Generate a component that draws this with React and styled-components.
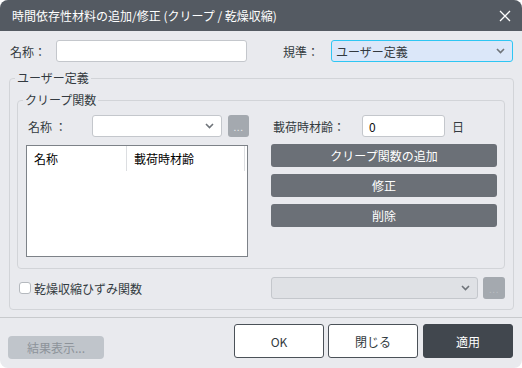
import { createGlobalStyle, styled } from "styled-components";

const GlobalStyle = createGlobalStyle`
  html, body {
    margin: 0;
    padding: 0;
    background: #ffffff;
  }
  body {
    font-family: "Noto Sans CJK JP", "Noto Sans", sans-serif;
    font-size: 12px;
    color: #333a40;
  }
`;

const Dialog = styled.div`
  width: 522px;
  height: 368px;
  background: #e9eaee;
  border-radius: 8px;
  overflow: hidden;
  display: flex;
  flex-direction: column;
`;

const TitleBar = styled.div`
  height: 31px;
  flex: none;
  background: #545a62;
  color: #ffffff;
  display: flex;
  align-items: center;
  justify-content: space-between;
  padding: 0 11px 0 12px;
  font-size: 12px;
`;

const Body = styled.div`
  padding: 9px 8px 0 9px;
`;

const Row = styled.div`
  display: flex;
  align-items: center;
  height: 22px;
`;

const Label = styled.span`
  width: ${(p) => p.$w}px;
  margin-left: ${(p) => p.$ml || 0}px;
  flex: none;
  white-space: nowrap;
`;

const TextBox = styled.div`
  width: ${(p) => p.$w}px;
  height: 22px;
  box-sizing: border-box;
  background: #ffffff;
  border: 1px solid #c4c7cc;
  border-radius: 3px;
  padding-left: 6px;
  display: flex;
  align-items: center;
  color: #111;
  flex: none;
`;

const Select = styled.div`
  width: ${(p) => p.$w}px;
  margin-left: ${(p) => p.$ml || 0}px;
  height: 22px;
  box-sizing: border-box;
  background: ${(p) => (p.$active ? "#dbe7f9" : p.$disabled ? "#dfe1e5" : "#ffffff")};
  border: 1px solid ${(p) => (p.$active ? "#2ec6f3" : "#c4c7cc")};
  border-radius: 3px;
  padding: 0 7px 0 4px;
  display: flex;
  align-items: center;
  justify-content: space-between;
  color: #333a40;
  flex: none;
`;

const DotsButton = styled.div`
  width: ${(p) => p.$w || 22}px;
  height: 22px;
  margin-left: ${(p) => p.$ml}px;
  background: #a4a9af;
  border-radius: 3px;
  color: ${(p) => (p.$disabled ? "#b9bdc2" : "#e8eaec")};
  font-size: 10px;
  display: flex;
  align-items: center;
  justify-content: center;
  flex: none;
  letter-spacing: 0.5px;
`;

const Fieldset = styled.fieldset`
  margin: ${(p) => p.$mt}px 0 0;
  padding: ${(p) => p.$pad};
  border: 1px solid #d2d4d8;
  border-radius: 4px;
  min-width: 0;
`;

const Legend = styled.legend`
  padding: 0 2px;
  margin-left: ${(p) => p.$ml}px;
  line-height: 16px;
  color: #333a40;
`;

const Columns = styled.div`
  display: grid;
  grid-template-columns: 222px 226px;
  column-gap: 23px;
`;

const Column = styled.div`
  display: flex;
  flex-direction: column;
  gap: ${(p) => p.$gap}px;
`;

const Table = styled.div`
  height: 112px;
  box-sizing: border-box;
  border: 1px solid #7d8288;
  background: #ffffff;
`;

const HeaderRow = styled.div`
  display: grid;
  grid-template-columns: 100px 118px 1fr;
  height: 25px;
`;

const HeaderCell = styled.div`
  border-right: 1px solid ${(p) => (p.$last ? "transparent" : "#dcdee1")};
  padding-left: 7px;
  display: flex;
  align-items: center;
  color: #000;
`;

const ActionButton = styled.div`
  height: 23px;
  background: #6b7077;
  border-radius: 3px;
  color: #ffffff;
  display: flex;
  align-items: center;
  justify-content: center;
`;

const CheckRow = styled.div`
  display: flex;
  align-items: center;
  height: 22px;
  margin-top: 8px;
`;

const CheckLabel = styled.div`
  width: 254px;
  flex: none;
  display: flex;
  align-items: center;
`;

const Checkbox = styled.span`
  width: 12px;
  height: 12px;
  box-sizing: border-box;
  margin: 0 3px 0 2px;
  background: #ffffff;
  border: 1px solid #b5b9be;
  border-radius: 3px;
`;

const Divider = styled.div`
  height: 1px;
  margin-top: 7px;
  background: #c8cacd;
  flex: none;
`;

const Footer = styled.div`
  flex: 1;
  display: flex;
  align-items: flex-end;
  padding: 0 9px 10px 8px;
`;

const ResultButton = styled.div`
  width: 96px;
  height: 23px;
  margin-bottom: -1px;
  background: #c0c5cb;
  color: #8d939a;
  border-radius: 4px;
  display: flex;
  align-items: center;
  justify-content: center;
`;

const FooterButtons = styled.div`
  margin-left: auto;
  display: flex;
  gap: 4px;
`;

const FooterButton = styled.div`
  width: 90px;
  height: 34px;
  box-sizing: border-box;
  border-radius: 3px;
  border: 1px solid ${(p) => (p.$primary ? "#41474e" : "#4b5158")};
  background: ${(p) => (p.$primary ? "#41474e" : "#ffffff")};
  color: ${(p) => (p.$primary ? "#ffffff" : "#333a40")};
  display: flex;
  align-items: center;
  justify-content: center;
  margin-left: ${(p) => p.$ml || 0}px;
`;

function Chevron() {
  return (
    <svg width="9" height="6" viewBox="0 0 9 6">
      <polyline points="1,1 4.5,4.5 8,1" fill="none" stroke="#6f747a" strokeWidth="1.6" />
    </svg>
  );
}

function CloseIcon() {
  return (
    <svg width="12" height="12" viewBox="0 0 12 12">
      <path d="M1 1 L11 11 M11 1 L1 11" stroke="#ffffff" strokeWidth="1.3" />
    </svg>
  );
}

export default function App() {
  return (
    <>
      <GlobalStyle />
      <Dialog>
        <TitleBar>
          <span>時間依存性材料の追加/修正 (クリープ / 乾燥収縮)</span>
          <CloseIcon />
        </TitleBar>
        <Body>
          <Row>
            <Label $w={46} $ml={1}>名称：</Label>
            <TextBox $w={191} />
            <Label $w={48} $ml={36}>規準：</Label>
            <Select $w={182} $active>
              <span>ユーザー定義</span>
              <Chevron />
            </Select>
          </Row>
          <Fieldset $mt={8} $pad="6px 8px 10px 7px">
            <Legend $ml={-2}>ユーザー定義</Legend>
            <Fieldset $mt={0} $pad="7px 7px 11px 8px">
              <Legend $ml={-3}>クリープ関数</Legend>
              <Columns>
                <Column $gap={8}>
                  <Row>
                    <Label $w={64} $ml={2}>名称 ：</Label>
                    <Select $w={130}>
                      <span />
                      <Chevron />
                    </Select>
                    <DotsButton $ml={6} $w={21}>...</DotsButton>
                  </Row>
                  <Table>
                    <HeaderRow>
                      <HeaderCell>名称</HeaderCell>
                      <HeaderCell>載荷時材齢</HeaderCell>
                      <HeaderCell $last />
                    </HeaderRow>
                  </Table>
                </Column>
                <Column $gap={7}>
                  <Row>
                    <Label $w={89} $ml={2}>載荷時材齢：</Label>
                    <TextBox $w={83}>0</TextBox>
                    <Label $w={20} $ml={7}>日</Label>
                  </Row>
                  <ActionButton>クリープ関数の追加</ActionButton>
                  <ActionButton>修正</ActionButton>
                  <ActionButton>削除</ActionButton>
                </Column>
              </Columns>
            </Fieldset>
            <CheckRow>
              <CheckLabel>
                <Checkbox />
                <span>乾燥収縮ひずみ関数</span>
              </CheckLabel>
              <Select $w={207} $disabled>
                <span />
                <Chevron />
              </Select>
              <DotsButton $ml={5} $disabled>...</DotsButton>
            </CheckRow>
          </Fieldset>
        </Body>
        <Divider />
        <Footer>
          <ResultButton>結果表示...</ResultButton>
          <FooterButtons>
            <FooterButton>OK</FooterButton>
            <FooterButton>閉じる</FooterButton>
            <FooterButton $primary $ml={1}>適用</FooterButton>
          </FooterButtons>
        </Footer>
      </Dialog>
    </>
  );
}
